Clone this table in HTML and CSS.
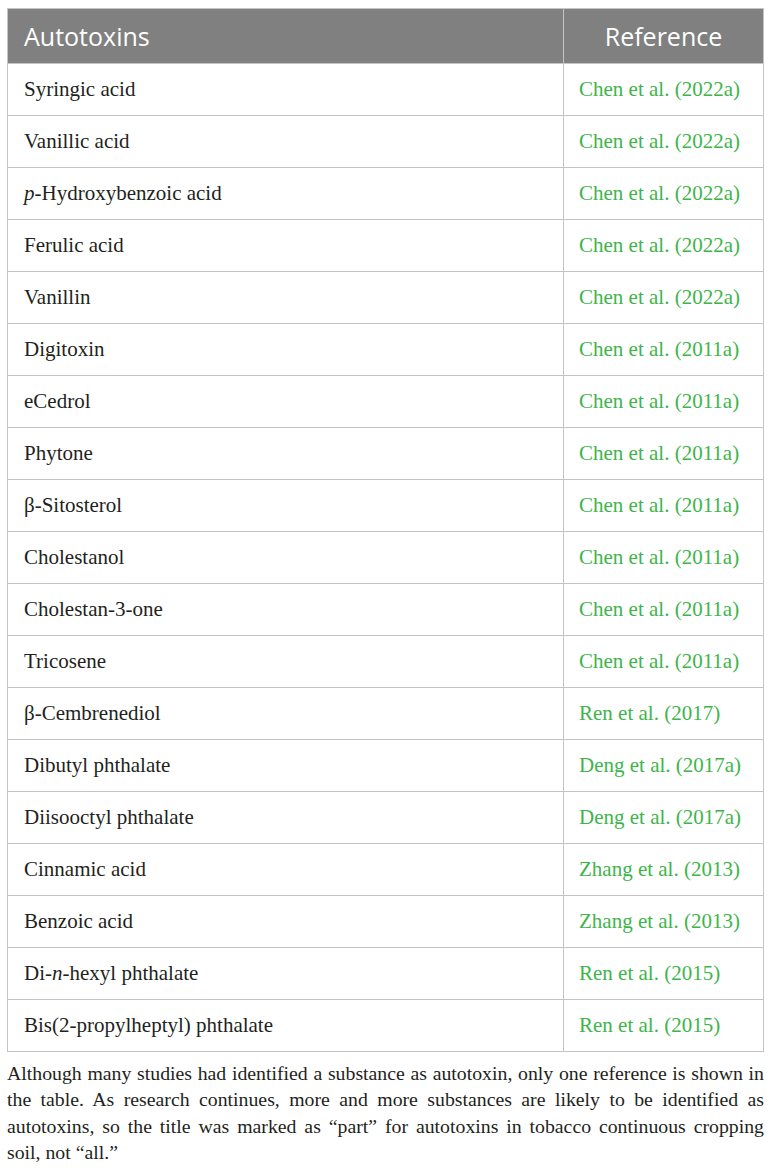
FILE: index.html
```html
<!DOCTYPE html>
<html>
<head>
<meta charset="utf-8">
<link rel="stylesheet" href="styles.css">
</head>
<body>
<table class="tbl">
  <thead>
    <tr><th class="c1">Autotoxins</th><th class="c2">Reference</th></tr>
  </thead>
  <tbody>
    <tr><td>Syringic acid</td><td class="ref">Chen et al. (2022a)</td></tr>
    <tr><td>Vanillic acid</td><td class="ref">Chen et al. (2022a)</td></tr>
    <tr><td><i>p</i>-Hydroxybenzoic acid</td><td class="ref">Chen et al. (2022a)</td></tr>
    <tr><td>Ferulic acid</td><td class="ref">Chen et al. (2022a)</td></tr>
    <tr><td>Vanillin</td><td class="ref">Chen et al. (2022a)</td></tr>
    <tr><td>Digitoxin</td><td class="ref">Chen et al. (2011a)</td></tr>
    <tr><td>eCedrol</td><td class="ref">Chen et al. (2011a)</td></tr>
    <tr><td>Phytone</td><td class="ref">Chen et al. (2011a)</td></tr>
    <tr><td>β-Sitosterol</td><td class="ref">Chen et al. (2011a)</td></tr>
    <tr><td>Cholestanol</td><td class="ref">Chen et al. (2011a)</td></tr>
    <tr><td>Cholestan-3-one</td><td class="ref">Chen et al. (2011a)</td></tr>
    <tr><td>Tricosene</td><td class="ref">Chen et al. (2011a)</td></tr>
    <tr><td>β-Cembrenediol</td><td class="ref">Ren et al. (2017)</td></tr>
    <tr><td>Dibutyl phthalate</td><td class="ref">Deng et al. (2017a)</td></tr>
    <tr><td>Diisooctyl phthalate</td><td class="ref">Deng et al. (2017a)</td></tr>
    <tr><td>Cinnamic acid</td><td class="ref">Zhang et al. (2013)</td></tr>
    <tr><td>Benzoic acid</td><td class="ref">Zhang et al. (2013)</td></tr>
    <tr><td>Di-<i>n</i>-hexyl phthalate</td><td class="ref">Ren et al. (2015)</td></tr>
    <tr><td>Bis(2-propylheptyl) phthalate</td><td class="ref">Ren et al. (2015)</td></tr>
  </tbody>
</table>
<p class="note">Although many studies had identified a substance as autotoxin, only one reference is shown in the table. As research continues, more and more substances are likely to be identified as autotoxins, so the title was marked as “part” for autotoxins in tobacco continuous cropping soil, not “all.”</p>
</body>
</html>
```

FILE: styles.css
```css
html, body {
  margin: 0;
  padding: 0;
  background: #ffffff;
}
body {
  padding: 8px 8px 0 7px;
}
.tbl {
  width: 757px;
  border-collapse: collapse;
  font-family: "Liberation Serif", "Times New Roman", serif;
  font-size: 21px;
  color: #231f20;
}
.tbl th {
  background: #808080;
  color: #ffffff;
  font-family: "Open Sans", "Liberation Sans", sans-serif;
  font-weight: 400;
  font-size: 25px;
  height: 55px;
  padding: 0 16px;
  border: 1px solid #c4c4c4;
  box-sizing: border-box;
}
.tbl th.c1 { text-align: left; width: 556px; }
.tbl th.c2 { text-align: center; }
.tbl td {
  height: 52px;
  box-sizing: border-box;
  padding: 0 16px;
  border: 1px solid #c4c4c4;
  vertical-align: middle;
}
.tbl td.ref {
  color: #3db54a;
  padding-left: 15px;
  white-space: nowrap;
}
.note {
  margin: 8px 0 0 0;
  width: 757px;
  font-family: "Liberation Serif", "Times New Roman", serif;
  font-size: 19.8px;
  line-height: 26.3px;
  color: #231f20;
  text-align: justify;
}
```
